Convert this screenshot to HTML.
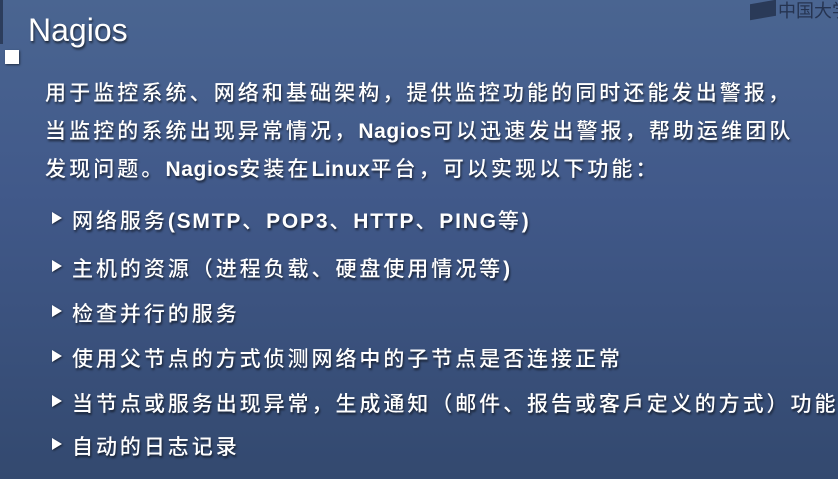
<!DOCTYPE html>
<html><head><meta charset="utf-8"><style>
html,body{margin:0;padding:0}
body{width:838px;height:479px;overflow:hidden;position:relative;
background:linear-gradient(180deg,#4a6591 0%,#41598a 40%,#33496f 100%);
font-family:"Liberation Sans","Noto Sans CJK SC",sans-serif;color:#fff;}
.t{position:absolute;white-space:nowrap;text-shadow:1px 2px 2px rgba(0,0,0,.6);}
.title{left:28px;top:12px;font-size:32px;}
.p{left:45px;font-size:21px;letter-spacing:3.1px;font-weight:500;}
.b{left:72px;font-size:21px;letter-spacing:2.95px;font-weight:500;}
.l{letter-spacing:0.6px;font-weight:bold;}
.l2{letter-spacing:1.8px;font-weight:bold;}
.tri{position:absolute;left:52px;width:0;height:0;border-left:10px solid #fff;border-top:6px solid transparent;border-bottom:6px solid transparent;filter:drop-shadow(1px 1px 1px rgba(0,0,0,.6));}
</style></head><body>
<div style="position:absolute;left:0;top:0;width:3px;height:44px;background:#2c3d5c"></div>
<div style="position:absolute;left:5px;top:50px;width:14px;height:14px;background:#fff;box-shadow:1px 1px 2px rgba(0,0,0,.5)"></div>
<div class="t title">Nagios</div>
<div style="position:absolute;left:750px;top:2px;width:26px;height:16px;background:#2a3a58;transform:skewY(-10deg)"></div>
<div style="position:absolute;left:778px;top:-3px;font-size:18px;color:#253350;white-space:nowrap">中国大学</div>
<div class="t p" style="top:77px">用于监控系统、网络和基础架构，提供监控功能的同时还能发出警报，</div>
<div class="t p" style="top:115px">当监控的系统出现异常情况，<span class="l">Nagios</span>可以迅速发出警报，帮助运维团队</div>
<div class="t p" style="top:153px">发现问题。<span class="l">Nagios</span>安装在<span class="l">Linux</span>平台，可以实现以下功能：</div>
<div class="tri" style="top:212px"></div><div class="t b" style="top:205px">网络服务<span class="l2">(SMTP</span>、<span class="l2">POP3</span>、<span class="l2">HTTP</span>、<span class="l2">PING</span>等<span class="l2">)</span></div>
<div class="tri" style="top:260px"></div><div class="t b" style="top:253px">主机的资源（进程负载、硬盘使用情况等<span class="l">)</span></div>
<div class="tri" style="top:305px"></div><div class="t b" style="top:298px">检查并行的服务</div>
<div class="tri" style="top:350px"></div><div class="t b" style="top:343px">使用父节点的方式侦测网络中的子节点是否连接正常</div>
<div class="tri" style="top:395px"></div><div class="t b" style="top:388px">当节点或服务出现异常，生成通知（邮件、报告或客戶定义的方式）功能</div>
<div class="tri" style="top:438px"></div><div class="t b" style="top:431px">自动的日志记录</div>
</body></html>
